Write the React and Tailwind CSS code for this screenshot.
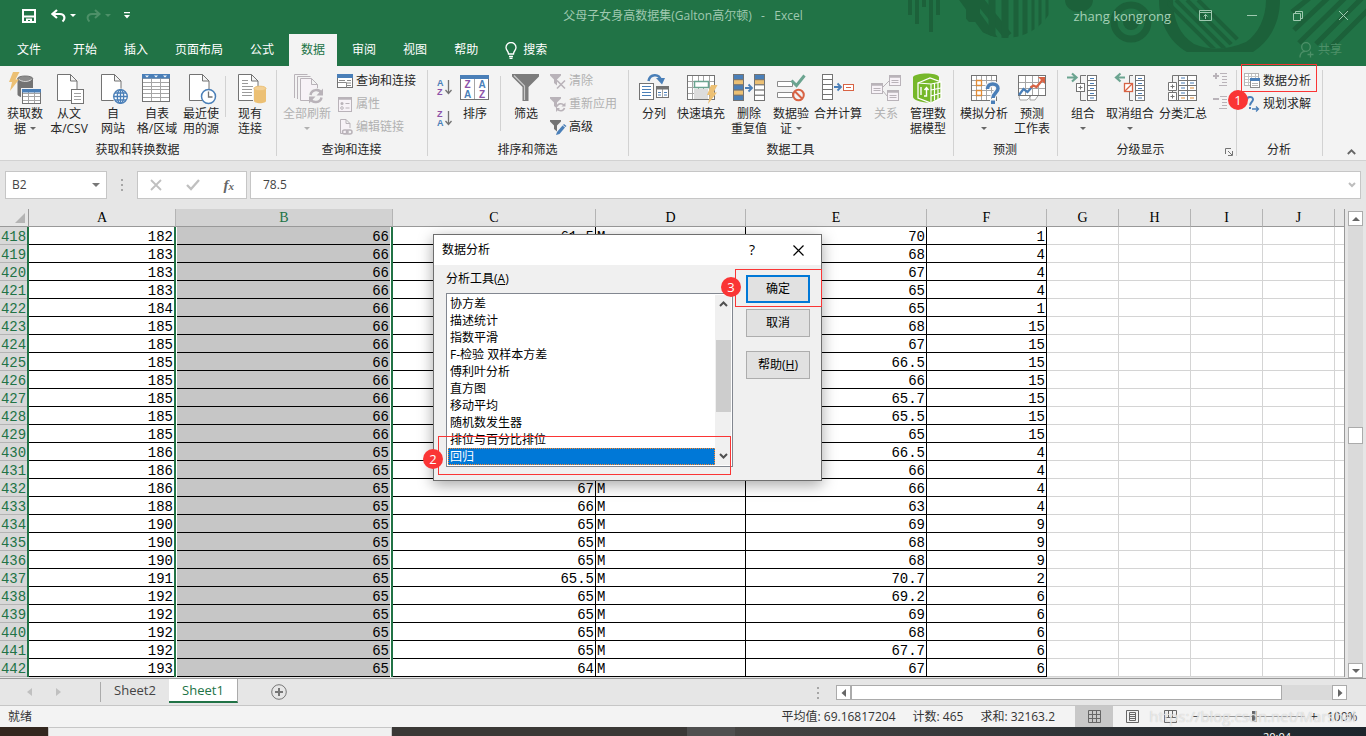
import { useState } from "react";
import clsx from "clsx";

const GRAY = "#737373";
const BLUE = "#4a7fb8";
const ORANGE = "#ecc074";
const GREEN = "#6ba490";
const RED = "#d86344";
const PURPLE = "#8c52a8";
const OFF = "#b9b3b9";

function Icon({ size = 32, children }) {
  return (
    <svg
      width={size}
      height={size}
      viewBox={`0 0 ${size} ${size}`}
      fill="none"
      className="shrink-0 overflow-visible"
      aria-hidden="true"
    >
      {children}
    </svg>
  );
}

// Lined rectangle used by most of the table shaped icons
function Table({ x, y, w, h, cols = 1, rows = 1, stroke = GRAY, fill = "#fff", inner = "#a5a5a5" }) {
  const lines = [];
  for (let i = 1; i < cols; i++) {
    const px = Math.round((w / cols) * i) + x;
    lines.push(<path key={`c${i}`} d={`M${px} ${y}v${h}`} stroke={inner} />);
  }
  for (let i = 1; i < rows; i++) {
    const py = Math.round((h / rows) * i) + y;
    lines.push(<path key={`r${i}`} d={`M${x} ${py}h${w}`} stroke={inner} />);
  }
  return (
    <g>
      <rect x={x} y={y} width={w} height={h} fill={fill} />
      {lines}
      <rect x={x} y={y} width={w} height={h} stroke={stroke} />
    </g>
  );
}

function Doc({ stroke = GRAY, fill = "#fff" }) {
  return (
    <path
      d="M4.500 2.500h13l6.500 6.500v19.500h-19.500zM17.500 2.500v6.500h6.500"
      stroke={stroke}
      fill={fill}
    />
  );
}

const Bolt = ({ x = 0, y = 0 }) => (
  <path
    d={`M${x + 4} ${y}h6.500l-4 7.500h3.500l-9 11.500 2-9h-3z`}
    fill={ORANGE}
  />
);

const GetDataIcon = () => (
  <Icon>
    <path d="M8.500 6.500v16c0 1.500 3 3 7.500 3s8-1.500 8-3v-16z" fill={GRAY} />
    <ellipse cx="16.200" cy="6.500" rx="7.500" ry="2.500" fill="#8c8c8c" stroke={GRAY} />
    <path d="M10 7.500c3 2.500 9.500 2.500 12.500 0" stroke="#fff" strokeWidth=".8" />
    <Bolt />
    <rect x="12" y="16" width="21" height="17" fill="#f3f3f3" />
    <Table x={13.5} y={17.5} w={18} h={14} cols={3} rows={4} />
    <path d="M13 17h19v3.500H13z" fill={BLUE} />
  </Icon>
);

const TextFileIcon = () => (
  <Icon>
    <Doc />
    <rect x="18.500" y="17.500" width="12" height="14" fill="#fff" stroke={GRAY} />
    <path d="M21 21.500h7M21 24.500h7M21 27.500h7" stroke="#a0a0a0" />
  </Icon>
);

const WebIcon = () => (
  <Icon>
    <Doc />
    <circle cx="23.500" cy="24.500" r="8" fill="#f3f3f3" />
    <g stroke={BLUE} strokeWidth="1.300">
      <circle cx="23.500" cy="24.500" r="6.800" fill="#fff" />
      <ellipse cx="23.500" cy="24.500" rx="3.200" ry="6.800" />
      <path d="M23.500 17.700v13.600M16.700 24.500h13.600M18 21h11M18 28h11" />
    </g>
  </Icon>
);

const TableIcon = () => (
  <Icon>
    <Table x={1.5} y={2.5} w={27} h={27} cols={3} rows={7} />
    <path d="M1 2h28v4.500H1z" fill={BLUE} />
    <path d="M4 3.500h4l-2 2zM13 3.500h4l-2 2zM22 3.500h4l-2 2z" fill="#fff" />
  </Icon>
);

const RecentIcon = () => (
  <Icon>
    <Doc />
    <circle cx="23.500" cy="24.500" r="7" fill="#fff" stroke={BLUE} strokeWidth="1.500" />
    <path d="M23.500 19.500v5.500h4" stroke={GRAY} strokeWidth="1.300" />
  </Icon>
);

const ConnectionIcon = () => (
  <Icon>
    <Doc />
    <path
      d="M8 8.500h6M8 11.500h6M8 14.500h11M8 17.500h10M8 20.500h10M8 23.500h10"
      stroke="#9a9a9a"
    />
    <path d="M19 15h14v17H19z" fill="#f3f3f3" />
    <path d="M20 16.500v12.500c0 1 2.500 2.300 6 2.300s6-1.300 6-2.300V16.500z" fill={ORANGE} />
    <ellipse cx="26" cy="16.500" rx="6" ry="2.300" fill="#f3d095" stroke={ORANGE} />
  </Icon>
);

const RefreshAllIcon = () => (
  <Icon>
    <path d="M3.500 26V2.500h13M6.500 27V4.500h13" stroke={OFF} />
    <path d="M9.500 6.500h11l6 6v16h-17zM20.500 6.500v6h6" stroke={OFF} fill="#f7f2f7" />
    <circle cx="25" cy="24" r="8" fill="#f3f3f3" />
    <path d="M19.500 23c1-6 9-6.500 11-1.500M30.500 25.500c-1 5.500-9 6-11 1.500" stroke={OFF} strokeWidth="2.500" />
    <path d="M32 16.500v7h-6.500zM18 31.500v-7h6.500z" fill={OFF} />
  </Icon>
);

const SortIcon = () => (
  <Icon>
    <Table x={1.5} y={3.5} w={28} h={24} cols={2} />
    <path d="M1 3h29v4H1z" fill={BLUE} />
    <g
      fontFamily="Liberation Sans, sans-serif"
      fontWeight="bold"
      fontSize="10"
      textAnchor="middle"
    >
      <text x="8.500" y="16" fill={PURPLE}>Z</text>
      <text x="8.500" y="26" fill={BLUE}>A</text>
      <text x="23" y="16" fill={BLUE}>A</text>
      <text x="23" y="26" fill={PURPLE}>Z</text>
    </g>
  </Icon>
);

const FunnelIcon = () => (
  <Icon>
    <path d="M2 2h27v2.500L18.500 15v14h-6V15L2 4.500z" fill="#7c7c7c" />
    <path d="M4 3.500 14.500 14v14" stroke="#c9c9c9" strokeWidth="1.200" />
  </Icon>
);

const SplitIcon = () => (
  <Icon>
    <path d="M10.500 9C12 2 21 1 23 8.500" stroke={BLUE} strokeWidth="2.500" />
    <path d="M18 6h9l-3 6.500z" fill={BLUE} />
    <rect x="1.500" y="11.500" width="14" height="16" fill="#fff" stroke={GRAY} />
    <path d="M4 14.500h9M4 17.500h9M4 20.500h9M4 23.500h9" stroke={BLUE} />
    <Table x={18.5} y={15.5} w={12} h={10} cols={2} />
    <path d="M18 14h13v3.500H18z" fill={GRAY} />
    <path d="M20 20.500h3M20 23h3M26 20.500h3M26 23h3" stroke={BLUE} />
  </Icon>
);

const FlashFillIcon = () => (
  <Icon>
    <Table x={2.5} y={3.5} w={27} h={24} cols={5} rows={4} />
    <path d="M9 17h14v10H9z" fill="#dcdcdc" />
    <rect x="9.500" y="9.500" width="14" height="6" fill="#fff" stroke={GREEN} strokeWidth="1.500" />
    <Bolt x={22} y={13} />
  </Icon>
);

const DedupeIcon = () => (
  <Icon>
    <g stroke={GRAY}>
      {[BLUE, ORANGE, BLUE, ORANGE, BLUE].map((fill, i) => (
        <rect key={i} x=".5" y={2.5 + i * 5.2} width="10" height="5.200" fill={fill} />
      ))}
      {[BLUE, ORANGE, "#fff", "#fff", "#fff"].map((fill, i) => (
        <rect key={i} x="21.500" y={2.5 + i * 5.2} width="10" height="5.200" fill={fill} />
      ))}
    </g>
    <path d="M12 16h6.500M15.500 12.500l3.500 3.500-3.500 3.500" stroke={BLUE} strokeWidth="1.800" />
  </Icon>
);

const ValidateIcon = () => (
  <Icon>
    <path d="M2.500 9.500h15v5h-15zM2.500 20.500h15v5h-15z" fill="#fff" stroke="#8a8a8a" />
    <path d="M16.500 8.500l5 5 8-10" stroke={GREEN} strokeWidth="3" />
    <circle cx="23.500" cy="23" r="5.300" fill="#f3f3f3" stroke={RED} strokeWidth="2" />
    <path d="M20 19.500l7 7" stroke={RED} strokeWidth="2" />
  </Icon>
);

const ConsolidateIcon = () => (
  <Icon>
    <Table x={0.5} y={2.5} w={10} h={25} rows={5} inner={GRAY} />
    <path d="M12 15h6.500M15.500 11.500l3.500 3.500-3.500 3.500" stroke={BLUE} strokeWidth="1.800" />
    <rect x="21.500" y="12.500" width="10" height="6" fill="#fff" stroke={RED} />
    <path d="M24 15.500h5" stroke={RED} />
  </Icon>
);

const RelationIcon = () => (
  <Icon>
    <path d="M13 15l6-6M13 19l4 5" stroke={OFF} />
    {[[1.5, 11.5], [19.5, 3.5], [17.5, 18.5]].map(([x, y]) => (
      <g key={x} stroke={OFF}>
        <rect x={x} y={y} width="11" height="10" fill="#f7f2f7" />
        <path d={`M${x} ${y + 1}h11`} strokeWidth="2.500" />
        <path d={`M${x + 2} ${y + 5}h7M${x + 2} ${y + 7}h7`} />
      </g>
    ))}
  </Icon>
);

const DataModelIcon = () => (
  <Icon>
    <path d="M1 5C3 1 24 0 27 5v18l-9 7.500C10 31 1 28 1 25z" fill="#76b82a" />
    <path d="M6 11l12-5 11 4v16l-10 5-13-5z" fill="#76b82a" stroke="#fff" strokeWidth="1.300" />
    <path d="M6 11l13 1 10-2M19 12v18M22.500 11.500v17M26 11v16M19 18l10-2M19 24l10-3" stroke="#fff" strokeWidth="1.200" />
    <path d="M12 24h2.500v-8M12.500 18l2-2.500 2 2.500M9 15v8" stroke="#fff" strokeWidth="1.400" />
  </Icon>
);

const WhatIfIcon = () => (
  <Icon>
    <Table x={3.5} y={3.5} w={25} h={25} cols={5} rows={5} />
    <path d="M8.500 8.500h5v5h-5zM8.500 18.500h5v5h-5z" fill="#fff" stroke="#e08b35" strokeWidth="1.300" />
    <path
      d="M19.500 17c0-7 10.500-6.500 10.500-.5 0 4-5 4.500-5 9"
      stroke="#f3f3f3"
      strokeWidth="6"
    />
    <path d="M22 27h6v5h-6z" fill="#f3f3f3" />
    <path d="M19.500 17c0-7 10.500-6.500 10.500-.5 0 4-5 4.500-5 9.500" stroke={BLUE} strokeWidth="3.500" />
    <path d="M23 28.500h4v3.500h-4z" fill={BLUE} />
  </Icon>
);

const ForecastIcon = () => (
  <Icon>
    <path d="M3 25l2-4h5l4 4-3 3H4zM14 25l4-4h6l-5 7h-5z" fill="#fff" stroke="#a5a5a5" />
    <Table x={2.5} y={3.5} w={27} h={20} cols={4} rows={3} />
    <path d="M3 23l4.500-6 4 3 4-4.500" stroke={BLUE} strokeWidth="2.300" />
    <path d="M14.500 15.500l3-2 3 1.500 6-7" stroke={RED} strokeWidth="2.300" />
    <path d="M22 5h7v7z" fill={RED} />
  </Icon>
);

const GroupIcon = () => (
  <Icon>
    <path d="M0 5.500h8M5 1.500l4.500 4-4.500 4" stroke={GREEN} strokeWidth="2.200" />
    <path d="M19 3.500h-5.500v25H19" stroke={GRAY} />
    <rect x="9.500" y="11.500" width="8" height="8" fill="#fff" stroke={GRAY} />
    <path d="M11.500 15.500h4M13.500 13.500v4" stroke={GRAY} />
    <Table x={20.5} y={3.5} w={9} h={25} rows={5} inner={GRAY} />
    <path d="M23 6.500h4M23 11.500h4M23 16.500h4M23 21.500h4M23 26h4" stroke={BLUE} />
  </Icon>
);

const UngroupIcon = () => (
  <Icon>
    <path d="M11 5.500H3M6.500 1.500L2 5.500l4.500 4" stroke={GREEN} strokeWidth="2.200" />
    <path d="M19 3.500h-3.500v25H19" stroke={GRAY} />
    <rect x="10.500" y="11.500" width="8" height="8" fill="#fff" stroke={RED} strokeWidth="1.300" />
    <path d="M11 19l7-7" stroke={RED} strokeWidth="1.300" />
    <Table x={21.5} y={3.5} w={9} h={25} rows={5} inner={GRAY} />
    <path d="M24 6.500h4M24 11.500h4M24 16.500h4M24 21.500h4M24 26h4" stroke={BLUE} />
  </Icon>
);

const SubtotalIcon = () => (
  <Icon>
    <path d="M11 3.500H5.500v25H11" stroke={GRAY} />
    <path d="M1.500 10.500h8v8h-8zM1.500 20.500h8v8h-8z" fill="#fff" stroke={GRAY} />
    <path d="M3.500 14.500h4M5.500 12.500v4M3.500 24.500h4M5.500 22.500v4" stroke={GRAY} />
    <Table x={11.5} y={3.5} w={18} h={25} cols={2} rows={5} inner={GRAY} />
    <path d="M14 6h4M14 11h4M14 16h4M14 21h4M23 11h4" stroke={BLUE} />
    <path d="M23 16h4M14 26h4M23 26h4" stroke="#e08b35" />
  </Icon>
);

function AZ({ top, bottom }) {
  const color = { A: BLUE, Z: PURPLE };
  return (
    <Icon size={16}>
      <g fontFamily="Liberation Sans, sans-serif" fontWeight="bold" fontSize="9">
        <text x="0" y="7" fill={color[top]}>{top}</text>
        <text x="0" y="16" fill={color[bottom]}>{bottom}</text>
      </g>
      <path d="M11.500 1v13M8.500 11l3 3.500 3-3.500" stroke={GRAY} strokeWidth="1.300" />
    </Icon>
  );
}

const QueriesIcon = () => (
  <Icon size={16}>
    <rect x=".5" y="1.500" width="15" height="13" fill="#fff" stroke={GRAY} />
    <path d="M0 1h16v4H0z" fill={BLUE} />
    <path d="M2 7.500h6M10 7.500h4M10 10h4M10 12.500h4M1 9.500h8.500v5" stroke="#8a8a8a" />
  </Icon>
);

const PropertiesIcon = () => (
  <Icon size={16}>
    <rect x="1.500" y="1.500" width="13" height="14" fill="#f7f2f7" stroke={OFF} />
    <path d="M1 2.500h14" stroke={OFF} strokeWidth="2.500" />
    <path d="M8.500 7.500h4M8.500 12h4" stroke={OFF} />
    <circle cx="5" cy="7.500" r="1.500" fill={OFF} />
    <circle cx="5" cy="12" r="1.300" stroke={OFF} />
  </Icon>
);

const LinksIcon = () => (
  <Icon size={16}>
    <path d="M9 14.500H3.500V.5H9l4 4V9M9 .5v4h4" stroke={OFF} fill="#f7f2f7" />
    <rect x="5.500" y="11" width="5.500" height="4" rx="2" stroke={OFF} strokeWidth="1.500" />
    <rect x="9.500" y="11" width="5.500" height="4" rx="2" stroke={OFF} strokeWidth="1.500" />
  </Icon>
);

const FilterGlyph = ({ color }) => (
  <path d="M0 1h11v1.500L7 6.500v6L4 10V6.500L0 2.500z" fill={color} />
);

const ClearIcon = () => (
  <Icon size={16}>
    <FilterGlyph color={OFF} />
    <path d="M7 7.500l8 8M15 7.500l-8 8" stroke={OFF} strokeWidth="1.600" />
  </Icon>
);

const ReapplyIcon = () => (
  <Icon size={16}>
    <FilterGlyph color={OFF} />
    <path d="M7 10.500c1-3.500 5.500-3.500 7-1M14.500 12c-1 3.500-5.500 3.500-7 1" stroke={OFF} strokeWidth="1.600" />
    <path d="M15.500 6.500v4h-4zM6 16v-4h4z" fill={OFF} />
  </Icon>
);

const AdvancedIcon = () => (
  <Icon size={16}>
    <FilterGlyph color={GRAY} />
    <path d="M7 13l5.500-6.500 2.500 2L9.500 15l-3.500 1z" fill={BLUE} />
    <path d="M13 6l1-1 2.500 2-1 1z" fill={BLUE} />
  </Icon>
);

const DetailIcon = ({ minus }) => (
  <Icon size={16}>
    <path d={minus ? "M0 4h6" : "M0 4h6M3 1v6"} stroke={OFF} strokeWidth="2" />
    <path d="M7 1.500h7M9 4.500h5M9 7.500h5M9 10.500h5M6 13.500h8" stroke={OFF} />
  </Icon>
);

const AnalysisIcon = () => (
  <Icon size={16}>
    <Table x={0.5} y={0.5} w={14} h={12} cols={4} rows={4} stroke="#b5b5b5" inner="#c5c5c5" />
    <rect x="6.500" y="5.500" width="9" height="9" fill="#fff" stroke="#8a8a8a" />
    <path d="M6 5h10v3H6z" fill={BLUE} />
    <path d="M8 10.500h6M8 12.500h6" stroke="#b5b5b5" />
  </Icon>
);

const SolverIcon = () => (
  <Icon size={16}>
    <path d="M3 4c0-4 6-4 6-.5 0 2.500-3 2.500-3 6" stroke={BLUE} strokeWidth="2" />
    <path d="M5 11h2v2H5z" fill={BLUE} />
    <path d="M8 13h6.500M12 10.500l2.500 2.500-2.500 2.500" stroke={BLUE} strokeWidth="1.300" />
  </Icon>
);

const Caret = ({ className }) => (
  <svg width="6" height="3" viewBox="0 0 6 3" className={className} aria-hidden="true">
    <path d="M0 0h6L3 3z" fill="currentColor" />
  </svg>
);

function BigButton({ icon, lines, width = "w-11", menu, disabled }) {
  return (
    <button
      type="button"
      disabled={disabled}
      className={clsx(
        "flex shrink-0 flex-col items-center whitespace-nowrap pt-[6px] leading-[15px]",
        width,
        disabled ? "text-[#b1b1b1]" : "text-[#262626]"
      )}
    >
      {icon}
      <span className="mt-[2px] block">{lines[0]}</span>
      <span className="flex h-[15px] items-center gap-1">
        {lines[1]}
        {menu && <Caret className={disabled ? "text-[#b1b1b1]" : "text-[#666]"} />}
      </span>
    </button>
  );
}

function SmallButton({ icon, children, disabled }) {
  return (
    <button
      type="button"
      disabled={disabled}
      className={clsx(
        "flex h-[23px] items-center gap-[3px] whitespace-nowrap",
        disabled ? "text-[#b1b1b1]" : "text-[#262626]"
      )}
    >
      {icon}
      {children}
    </button>
  );
}

function Group({ label, width, launcher, children }) {
  return (
    <section className={clsx("relative flex shrink-0 flex-col pb-[3px]", width)}>
      <div className="flex h-[76px]">{children}</div>
      <div className="flex h-[15px] items-center text-[#262626]">
        <span className="flex-1 pr-[2px] text-center">{label}</span>
        {launcher && (
          <button type="button" aria-label="更多选项" className="w-3 pt-1">
            <svg width="8" height="8" viewBox="0 0 8 8" fill="none" stroke="#737373">
              <path d="M.5 6V.5H6M3 3l4 4M7.500 3v4.500H3" />
            </svg>
          </button>
        )}
      </div>
      <div className="absolute right-0 top-1 h-[86px] w-px bg-[#d2d2d2]" />
    </section>
  );
}

function Badge({ className, children }) {
  return (
    <span
      className={clsx(
        "absolute flex h-5 w-5 items-center justify-center rounded-full bg-[#fa3535] text-[13px] text-white",
        className
      )}
    >
      {children}
    </span>
  );
}

function HeaderArt() {
  return (
    <svg
      width="486"
      height="66"
      viewBox="0 0 486 66"
      className="absolute right-0 top-0"
      fill="none"
      aria-hidden="true"
    >
      <defs>
        <clipPath id="disc"><circle cx="126" cy="-13" r="51" /></clipPath>
        <clipPath id="bowl"><path d="M287 0a54 54 0 0 0 21 40q10 8 25 8h12a60 60 0 0 0 32-48z" /></clipPath>
      </defs>
      <path
        d="M28 0h4v15h-4zM35 0h4v24h-4zM42 0h4v7h-4zM49 0h4v32h-4zM56 0h4v15h-4z"
        fill="#1c613a"
      />
      <g clipPath="url(#disc)" stroke="#1c613a">
        <path d="M70 -20l44 60M78 -26l50 62" strokeWidth="9" />
        <path d="M112 0v40M125 0v40" strokeWidth="7" />
        <path d="M136 0v40M145 0v40" strokeWidth="5" />
        <path d="M153 0v40M160 0v40M167 0v40" strokeWidth="3" />
        <path d="M93 0v22" strokeWidth="14" />
      </g>
      <path d="M185 0a14 12 0 0 0 28 0z" fill="#1c613a" />
      <circle cx="251" cy="22" r="17" stroke="#1c613a" strokeWidth="7" />
      <circle cx="251" cy="22" r="8" fill="#1c613a" />
      <path d="M279 0c0 22 10 42 28 52h66c18-11 27-31 27-52h-14c0 18-8 34-20 42q-28 12-52 2C300 35 293 20 293 0z" fill="#1c613a" />
      <g clipPath="url(#bowl)" stroke="#1c613a" strokeWidth="4">
        <path d="M285 0l52 52M296 0l52 52M307 0l50 50M318 0l46 46" />
      </g>
      <path
        d="M432 -4l-20 16M450 -4l-36 34M467 -4l-48 47M484 -4l-48 48M490 8l-40 40"
        stroke="#1c613a"
        strokeWidth="5"
      />
    </svg>
  );
}

function TitleBar() {
  return (
    <div className="relative flex h-[34px] items-center pb-[3px] text-[#9fc9b0]">
      <div className="flex flex-1 items-center">
        <button type="button" aria-label="保存" className="ml-[22px]">
          <svg width="14" height="14" viewBox="0 0 14 14" fill="none">
            <path d="M1 1h12v12H1zM1 7.500h12" stroke="#fff" strokeWidth="2" />
            <path d="M4 13v-3.500h6V13H8v-2H6v2z" fill="#fff" />
          </svg>
        </button>
        <button type="button" aria-label="撤消" className="ml-[15px] flex items-center gap-1 text-white">
          <svg width="15" height="14" viewBox="0 0 15 14" fill="none" stroke="currentColor" strokeWidth="2.200">
            <path d="M6 1L1.500 5 6 9M2 5h7c5 0 5.500 5 2.500 7.500" />
          </svg>
          <Caret />
        </button>
        <button type="button" disabled aria-label="恢复" className="ml-[10px] flex items-center gap-1 text-[#4d9068]">
          <svg width="15" height="14" viewBox="0 0 15 14" fill="none" stroke="currentColor" strokeWidth="2">
            <path d="M9 1l4.500 4L9 9M13 5H6C1 5 .5 10 3.500 12.500" />
          </svg>
          <Caret />
        </button>
        <button type="button" aria-label="自定义快速访问工具栏" className="ml-[13px] text-white">
          <svg width="6" height="7" viewBox="0 0 6 7" fill="currentColor">
            <path d="M0 0h6v1.200H0zM0 3h6L3 6.500z" />
          </svg>
        </button>
      </div>
      <h1 className="whitespace-pre">父母子女身高数据集(Galton高尔顿)   -   Excel</h1>
      <div className="flex flex-1 items-center justify-end">
        <span className="mr-[11px] text-[13px] text-[#a5d0b6]">zhang kongrong</span>
        {[
          ["功能区显示选项", "M.5 1.500h12v10H.5zM.5 3.500h12M6.500 10V5.500M4.500 7.500l2-2 2 2"],
          ["最小化", "M2 6.500h10"],
          ["还原", "M2.500 4.500h7v7h-7zM4.500 4.500v-2h7v7h-2"],
          ["关闭", "M2 2l9 9M11 2l-9 9"],
        ].map(([label, d]) => (
          <button key={label} type="button" aria-label={label} className="flex w-[46px] justify-center">
            <svg width="13" height="13" viewBox="0 0 13 13" fill="none" stroke="currentColor">
              <path d={d} />
            </svg>
          </button>
        ))}
      </div>
    </div>
  );
}

const TABS = ["文件", "开始", "插入", "页面布局", "公式", "数据", "审阅", "视图", "帮助"];

function RibbonTabs() {
  return (
    <nav className="relative flex h-8 items-stretch gap-[3px] pl-[5px] text-white">
      {TABS.map((tab) => (
        <button
          key={tab}
          type="button"
          className={clsx(
            "px-3",
            tab === "文件" && "mr-[5px]",
            tab === "数据" && "bg-[#f3f3f3] text-[#217346]"
          )}
        >
          {tab}
        </button>
      ))}
      <button type="button" className="flex items-center gap-[6px] px-3">
        <svg width="12" height="17" viewBox="0 0 12 17" fill="none" stroke="#fff" strokeWidth="1.300">
          <path d="M3.500 12c0-3-2.500-3.500-2.500-6.500a5 5 0 0 1 10 0c0 3-2.500 3.500-2.500 6.500zM4 14.500h4M4.500 16.300h3" />
        </svg>
        搜索
      </button>
      <button type="button" disabled className="ml-auto mr-6 flex items-center gap-1 text-[#4d9068]">
        <svg width="15" height="16" viewBox="0 0 15 16" fill="none" stroke="currentColor" strokeWidth="1.300">
          <circle cx="7" cy="5" r="4.300" />
          <path d="M1 15.500c0-3.500 2-6 5-6.200M8.500 12.500h6M11.500 9.500v6" />
        </svg>
        共享
      </button>
    </nav>
  );
}

function Ribbon() {
  return (
    <div className="relative flex border-b border-[#d2d2d2] bg-[#f3f3f3]">
      <Group label="获取和转换数据" width="w-[277px]">
        <div className="flex pl-[3px]">
          <BigButton icon={<GetDataIcon />} lines={["获取数", "据"]} menu />
          <BigButton icon={<TextFileIcon />} lines={["从文", "本/CSV"]} />
          <BigButton icon={<WebIcon />} lines={["自", "网站"]} />
          <BigButton icon={<TableIcon />} lines={["自表", "格/区域"]} />
          <BigButton icon={<RecentIcon />} lines={["最近使", "用的源"]} />
          <div className="mx-[2px] mt-[10px] h-[41px] w-px bg-[#d2d2d2]" />
          <BigButton icon={<ConnectionIcon />} lines={["现有", "连接"]} />
        </div>
      </Group>

      <Group label="查询和连接" width="w-[151px]">
        <div className="flex pl-1">
          <BigButton icon={<RefreshAllIcon />} lines={["全部刷新"]} width="w-[52px]" menu disabled />
          <div className="flex flex-col pl-1 pt-[3px]">
            <SmallButton icon={<QueriesIcon />}>查询和连接</SmallButton>
            <SmallButton icon={<PropertiesIcon />} disabled>属性</SmallButton>
            <SmallButton icon={<LinksIcon />} disabled>编辑链接</SmallButton>
          </div>
        </div>
      </Group>

      <Group label="排序和筛选" width="w-[201px]">
        <div className="flex pl-[9px]">
          <div className="flex flex-col gap-[15px] pt-[13px]">
            <button type="button" aria-label="升序"><AZ top="A" bottom="Z" /></button>
            <button type="button" aria-label="降序"><AZ top="Z" bottom="A" /></button>
          </div>
          <BigButton icon={<SortIcon />} lines={["排序"]} />
          <div className="mx-[3px] mt-[10px] h-[55px] w-px bg-[#d2d2d2]" />
          <BigButton icon={<FunnelIcon />} lines={["筛选"]} />
          <div className="flex flex-col pl-[2px] pt-[3px]">
            <SmallButton icon={<ClearIcon />} disabled>清除</SmallButton>
            <SmallButton icon={<ReapplyIcon />} disabled>重新应用</SmallButton>
            <SmallButton icon={<AdvancedIcon />}>高级</SmallButton>
          </div>
        </div>
      </Group>

      <Group label="数据工具" width="w-[325px]">
        <div className="flex pl-[5px]">
          <BigButton icon={<SplitIcon />} lines={["分列"]} width="w-10" />
          <BigButton icon={<FlashFillIcon />} lines={["快速填充"]} width="w-[54px]" />
          <BigButton icon={<DedupeIcon />} lines={["删除", "重复值"]} width="w-[42px]" />
          <BigButton icon={<ValidateIcon />} lines={["数据验", "证"]} width="w-[42px]" menu />
          <BigButton icon={<ConsolidateIcon />} lines={["合并计算"]} width="w-[52px]" />
          <BigButton icon={<RelationIcon />} lines={["关系"]} disabled />
          <BigButton icon={<DataModelIcon />} lines={["管理数", "据模型"]} width="w-10" />
        </div>
      </Group>

      <Group label="预测" width="w-[104px]">
        <div className="flex pl-1">
          <BigButton icon={<WhatIfIcon />} lines={["模拟分析"]} width="w-[52px]" menu />
          <BigButton icon={<ForecastIcon />} lines={["预测", "工作表"]} />
        </div>
      </Group>

      <Group label="分级显示" width="w-[179px]" launcher>
        <div className="flex pl-[5px]">
          <BigButton icon={<GroupIcon />} lines={["组合"]} width="w-10" menu />
          <BigButton icon={<UngroupIcon />} lines={["取消组合"]} width="w-[54px]" menu />
          <BigButton icon={<SubtotalIcon />} lines={["分类汇总"]} width="w-[52px]" />
          <div className="flex flex-col gap-[7px] pl-1 pt-[6px]">
            <button type="button" disabled aria-label="显示明细数据"><DetailIcon /></button>
            <button type="button" disabled aria-label="隐藏明细数据"><DetailIcon minus /></button>
          </div>
        </div>
      </Group>

      <Group label="分析" width="w-[86px]">
        <div className="flex flex-col pl-[7px] pt-[3px]">
          <SmallButton icon={<AnalysisIcon />}>数据分析</SmallButton>
          <SmallButton icon={<SolverIcon />}>规划求解</SmallButton>
        </div>
        <div className="absolute -top-[2px] left-1 h-7 w-[76px] border border-[#fa3535]" />
        <Badge className="-left-[9px] top-6">1</Badge>
      </Group>

      <button type="button" aria-label="折叠功能区" className="mb-[5px] ml-auto mr-[10px] self-end">
        <svg width="9" height="6" viewBox="0 0 9 6" fill="none" stroke="#666" strokeWidth="1.800">
          <path d="M.8 5l3.700-3.700L8.200 5" />
        </svg>
      </button>
    </div>
  );
}

const Dots = () => (
  <svg width="3" height="12" viewBox="0 0 3 12" fill="#a6a6a6" aria-hidden="true">
    <path d="M0 0h2v2H0zM0 5h2v2H0zM0 10h2v2H0z" />
  </svg>
);

function FormulaBar() {
  const [value, setValue] = useState("78.5");
  return (
    <div className="flex items-center px-[5px] py-[10px] text-[#444]">
      <div className="flex h-7 w-[102px] items-center border border-[#c6c6c6] bg-white pr-[6px]">
        <input
          aria-label="名称框"
          defaultValue="B2"
          className="w-full min-w-0 bg-transparent pl-[6px] outline-none"
        />
        <svg width="8" height="4" viewBox="0 0 8 4" className="shrink-0">
          <path d="M0 0h8L4 4z" fill="#777" />
        </svg>
      </div>
      <div className="flex w-[30px] justify-center"><Dots /></div>
      <div className="flex h-7 w-[110px] items-center justify-around border border-[#c6c6c6] bg-white">
        <button type="button" aria-label="取消">
          <svg width="12" height="12" viewBox="0 0 12 12" stroke="#c0c0c0" strokeWidth="1.800">
            <path d="M1 1l10 10M11 1L1 11" />
          </svg>
        </button>
        <button type="button" aria-label="输入">
          <svg width="14" height="12" viewBox="0 0 14 12" fill="none" stroke="#c0c0c0" strokeWidth="2.300">
            <path d="M1 6l4 4 8-9" />
          </svg>
        </button>
        <button type="button" aria-label="插入函数" className="font-['Liberation_Serif',serif] text-[15px] font-bold italic text-[#666]">
          f<span className="text-[11px]">x</span>
        </button>
      </div>
      <div className="ml-[3px] flex h-7 flex-1 items-center border border-[#c6c6c6] bg-white pr-1">
        <input
          aria-label="编辑栏"
          value={value}
          onChange={(event) => setValue(event.target.value)}
          className="w-full min-w-0 bg-transparent pl-3 outline-none"
        />
        <svg width="8" height="6" viewBox="0 0 8 6" fill="none" stroke="#bdbdbd" strokeWidth="2" className="shrink-0">
          <path d="M1 1l3 3 3-3" />
        </svg>
      </div>
    </div>
  );
}

const COLUMNS = ["A", "B", "C", "D", "E", "F", "G", "H", "I", "J"];

const ROWS = [
  [418, 182, 66, 61.5, "M", 70, 1],
  [419, 183, 66, "", "", 68, 4],
  [420, 183, 66, "", "", 67, 4],
  [421, 183, 66, "", "", 65, 4],
  [422, 184, 66, "", "", 65, 1],
  [423, 185, 66, "", "", 68, 15],
  [424, 185, 66, "", "", 67, 15],
  [425, 185, 66, "", "", 66.5, 15],
  [426, 185, 66, "", "", 66, 15],
  [427, 185, 66, "", "", 65.7, 15],
  [428, 185, 66, "", "", 65.5, 15],
  [429, 185, 66, "", "", 65, 15],
  [430, 186, 65, "", "", 66.5, 4],
  [431, 186, 65, "", "", 66, 4],
  [432, 186, 65, 67, "M", 66, 4],
  [433, 188, 65, 66, "M", 63, 4],
  [434, 190, 65, 65, "M", 69, 9],
  [435, 190, 65, 65, "M", 68, 9],
  [436, 190, 65, 65, "M", 68, 9],
  [437, 191, 65, 65.5, "M", 70.7, 2],
  [438, 192, 65, 65, "M", 69.2, 6],
  [439, 192, 65, 65, "M", 69, 6],
  [440, 192, 65, 65, "M", 68, 6],
  [441, 192, 65, 65, "M", 67.7, 6],
  [442, 193, 65, 64, "M", 67, 6],
];

function Cell({ column, value }) {
  return (
    <td
      className={clsx(
        "p-0",
        column < 2 && "border-r-2 border-[#217346]",
        column > 1 && column < 6 && "border-r border-black",
        column > 5 && column < 10 && "border-r border-[#d4d4d4]"
      )}
    >
      <div
        className={clsx(
          "h-[18px] overflow-hidden border-b px-px leading-[20px]",
          column < 6 ? "border-black" : "border-[#d4d4d4]",
          column === 1 && "mx-px bg-[#c6c6c6]",
          column === 3 ? "text-left" : "text-right"
        )}
      >
        {value}
      </div>
    </td>
  );
}

function Grid() {
  return (
    <table className="w-full table-fixed border-separate border-spacing-0 border-r border-[#999] bg-white font-['Liberation_Mono',monospace] text-[14px] text-black">
      <colgroup>
        <col className="w-[29px]" />
        <col className="w-[147px]" />
        <col className="w-[217px]" />
        <col className="w-[203px]" />
        <col className="w-[150px]" />
        <col className="w-[181px]" />
        <col className="w-[120px]" />
        <col className="w-[72px]" />
        <col className="w-[72px]" />
        <col className="w-[72px]" />
        <col className="w-[72px]" />
        <col />
      </colgroup>
      <thead>
        <tr className="bg-[#e6e6e6] font-['Liberation_Serif',serif]">
          <th className="h-[18px] border-b border-r border-[#999] p-0">
            <svg width="10" height="10" viewBox="0 0 10 10" className="ml-auto mr-[3px]">
              <path d="M10 0v10H0z" fill="#b4b4b4" />
            </svg>
          </th>
          {COLUMNS.map((name) => (
            <th
              key={name}
              className={clsx(
                "h-[18px] border-b border-r border-b-[#999] border-r-[#b4b4b4] p-0 pt-px font-normal leading-4",
                name === "B" && "bg-[#d2d2d2] text-[#217346]"
              )}
            >
              {name}
            </th>
          ))}
          <th className="border-b border-[#999] p-0" />
        </tr>
      </thead>
      <tbody>
        {ROWS.map(([number, ...values]) => (
          <tr key={number}>
            <th className="border-r-2 border-[#217346] bg-[#d8d8d8] p-0 font-normal text-[#217346]">
              <div className="h-[18px] overflow-hidden border-b border-[#b4b4b4] leading-[20px]">
                {number}
              </div>
            </th>
            {[...COLUMNS, ""].map((name, i) => (
              <Cell key={i} column={i} value={values[i]} />
            ))}
          </tr>
        ))}
      </tbody>
    </table>
  );
}

const ScrollButton = ({ label, d }) => (
  <button
    type="button"
    aria-label={label}
    className="flex h-[15px] w-[15px] shrink-0 items-center justify-center border border-[#ababab] bg-white"
  >
    <svg width="8" height="8" viewBox="0 0 8 8" fill="#666">
      <path d={d} />
    </svg>
  </button>
);

const TOOLS = [
  "协方差",
  "描述统计",
  "指数平滑",
  "F-检验 双样本方差",
  "傅利叶分析",
  "直方图",
  "移动平均",
  "随机数发生器",
  "排位与百分比排位",
  "回归",
];

function AnalysisDialog() {
  const [selected, setSelected] = useState("回归");
  return (
    <div
      role="dialog"
      aria-labelledby="dialog-title"
      className="absolute left-[433px] top-[25px] w-[389px] border border-[#6e6e6e] bg-[#f0f0f0] pb-[13px] text-black shadow-[0_4px_14px_rgba(0,0,0,0.35)]"
    >
      <div className="flex h-[30px] items-center bg-white pl-2">
        <h2 id="dialog-title" className="flex-1">数据分析</h2>
        <button type="button" aria-label="帮助" className="w-[46px] text-[14px]">?</button>
        <button type="button" aria-label="关闭" className="flex w-[46px] justify-center">
          <svg width="11" height="11" viewBox="0 0 11 11" stroke="#000" strokeWidth="1.200">
            <path d="M.5 .5l10 10M10.500 .5l-10 10" />
          </svg>
        </button>
      </div>
      <div className="flex pl-3 pr-[11px]">
        <div className="w-[287px]">
          <div id="tools-label" className="pb-[5px] pt-[5px] leading-[18px]">
            分析工具(<u>A</u>)
          </div>
          <div className="flex border border-[#828790] bg-white p-px">
            <ul role="listbox" aria-labelledby="tools-label" className="flex-1">
              {TOOLS.map((tool) => (
                <li
                  key={tool}
                  role="option"
                  aria-selected={tool === selected}
                  onClick={() => setSelected(tool)}
                  className={clsx(
                    "h-[17px] border border-dotted pl-px leading-[15px]",
                    tool === selected
                      ? "border-[#ff8728] bg-[#0078d7] text-white"
                      : "border-transparent"
                  )}
                >
                  {tool}
                </li>
              ))}
            </ul>
            <div className="flex w-4 flex-col items-center bg-[#f0f0f0] py-[6px]">
              <svg width="9" height="6" viewBox="0 0 9 6" fill="none" stroke="#505050" strokeWidth="2">
                <path d="M1 5l3.500-3.500L8 5" />
              </svg>
              <div className="mt-[33px] h-[72px] w-[15px] bg-[#cdcdcd]" />
              <svg width="9" height="6" viewBox="0 0 9 6" fill="none" stroke="#505050" strokeWidth="2" className="mt-auto">
                <path d="M1 1l3.500 3.500L8 1" />
              </svg>
            </div>
          </div>
        </div>
        <div className="ml-auto flex w-16 flex-col pt-[10px]">
          <button type="button" className="h-7 border-2 border-[#0078d7] bg-[#e1e1e1]">确定</button>
          <button type="button" className="mt-[6px] h-7 border border-[#adadad] bg-[#e1e1e1]">取消</button>
          <button type="button" className="mt-[14px] h-7 border border-[#adadad] bg-[#e1e1e1]">
            帮助(<u>H</u>)
          </button>
        </div>
      </div>
      <div className="absolute left-1 top-[201px] h-[39px] w-[293px] border border-[#fa3535]" />
      <div className="absolute left-[301px] top-[34px] h-[38px] w-[87px] border border-[#fa3535]" />
      <Badge className="-left-[11px] top-[214px]">2</Badge>
      <Badge className="left-[287px] top-[42px]">3</Badge>
    </div>
  );
}

function SheetTabs() {
  return (
    <div className="flex h-[27px] items-start border-b border-[#c6c6c6] text-[13px] text-[#444]">
      <div className="flex w-[100px] items-center gap-6 self-stretch pl-[27px] text-[#c0c0c0]">
        <svg width="5" height="8" viewBox="0 0 5 8" fill="currentColor"><path d="M5 0v8L0 4z" /></svg>
        <svg width="5" height="8" viewBox="0 0 5 8" fill="currentColor"><path d="M0 0v8l5-4z" /></svg>
      </div>
      <button type="button" className="mt-[3px] h-5 w-[69px] border-l border-[#ababab] pb-1 leading-4">Sheet2</button>
      <button
        type="button"
        className="h-6 w-[69px] border-b-2 border-r border-b-[#217346] border-r-[#ababab] bg-white leading-5 text-[#217346]"
      >
        Sheet1
      </button>
      <button type="button" aria-label="新工作表" className="ml-[33px] mt-[5px]">
        <svg width="16" height="16" viewBox="0 0 16 16" fill="none" stroke="#777">
          <circle cx="8" cy="8" r="7.300" />
          <path d="M8 4v8M4 8h8" strokeWidth="2" />
        </svg>
      </button>
      <div className="ml-auto mt-[6px] flex items-start">
        <div className="mr-4 mt-[2px]"><Dots /></div>
        <ScrollButton label="向左滚动" d="M6 0v8L1.500 4z" />
        <div className="h-[15px] w-[431px] border border-[#ababab] bg-white" />
        <div className="h-[15px] w-[50px] bg-[#dadada]" />
        <ScrollButton label="向右滚动" d="M2 0v8l4.500-4z" />
        <div className="w-[19px]" />
      </div>
    </div>
  );
}

function StatusBar() {
  return (
    <div className="relative flex h-[21px] items-center bg-[#f3f3f3] text-[#333]">
      <span className="flex-1 pl-2">就绪</span>
      <span className="mr-[17px]">平均值: 69.16817204</span>
      <span className="mr-[17px]">计数: 465</span>
      <span className="mr-5">求和: 32163.2</span>
      <button type="button" aria-label="普通" className="flex h-full w-[38px] items-center justify-center bg-[#c8c8c8]">
        <svg width="13" height="13" viewBox="0 0 13 13" fill="none" stroke="#666">
          <path d="M.5 .5h12v12H.5zM4.500 .5v12M8.500 .5v12M.5 4.500h12M.5 8.500h12" />
        </svg>
      </button>
      <button type="button" aria-label="页面布局视图" className="flex w-[38px] justify-center">
        <svg width="13" height="13" viewBox="0 0 13 13" fill="none" stroke="#666">
          <path d="M.5 .5h12v12H.5zM3.500 2.500h6v8h-6zM4 4.500h5M4 6.500h5M4 8.500h5" />
        </svg>
      </button>
      <button type="button" aria-label="分页预览" className="flex w-[38px] justify-center">
        <svg width="13" height="13" viewBox="0 0 13 13" fill="none" stroke="#666">
          <path d="M.5 .5h12v12H.5zM4.500 1v6.500M8.500 1v6.500M.5 7.500h12" />
        </svg>
      </button>
      <button type="button" aria-label="缩小" className="w-[14px] leading-4">−</button>
      <input
        type="range"
        min="10"
        max="190"
        defaultValue="100"
        aria-label="缩放"
        className="h-px w-[102px] appearance-none bg-[#999] [&::-webkit-slider-thumb]:h-[11px] [&::-webkit-slider-thumb]:w-[5px] [&::-webkit-slider-thumb]:appearance-none [&::-webkit-slider-thumb]:bg-[#666]"
      />
      <button type="button" aria-label="放大" className="ml-[2px] w-[14px] text-[14px] leading-4">+</button>
      <span className="w-[45px] pl-[6px]">100%</span>
      <span className="absolute right-[10px] top-0 whitespace-nowrap text-[15px] leading-[21px] text-white/60 [text-shadow:0_0_1px_#bbb]">
        https://blog.csdn.net/Marshal
      </span>
    </div>
  );
}

export default function App() {
  return (
    <div className="flex min-h-screen flex-col bg-[#e6e6e6] font-['Open_Sans','Noto_Sans_CJK_SC',sans-serif] text-[12px] leading-[16px]">
      <header className="relative bg-[#217346]">
        <HeaderArt />
        <TitleBar />
        <RibbonTabs />
      </header>
      <Ribbon />
      <FormulaBar />
      <main className="relative flex border-b border-[#999]">
        <div className="min-w-0 flex-1 pb-px">
          <Grid />
        </div>
        <div className="flex w-[21px] flex-col items-center pt-[2px]">
          <ScrollButton label="向上滚动" d="M0 6h8L4 2z" />
          <div className="flex w-[15px] flex-1 flex-col bg-[#dadada]">
            <div className="mt-[201px] h-[17px] w-full border border-[#ababab] bg-white" />
          </div>
          <ScrollButton label="向下滚动" d="M0 2h8L4 6z" />
        </div>
        <AnalysisDialog />
      </main>
      <SheetTabs />
      <StatusBar />
      <div className="flex h-[9px] overflow-hidden bg-[#3a3836]">
        <div className="w-12 bg-[#33271f]" />
        <div className="w-[344px] border border-b-0 border-[#c6c6c6] bg-[#f0f0f0]" />
        <div className="ml-[295px] w-12 bg-[#4f4f4f]" />
        <div className="flex-1 bg-linear-to-r from-[#454442] to-[#1d252c] pr-[75px] pt-[3px] text-right text-[11px] leading-[14px] text-white">
          20:04
        </div>
      </div>
    </div>
  );
}
